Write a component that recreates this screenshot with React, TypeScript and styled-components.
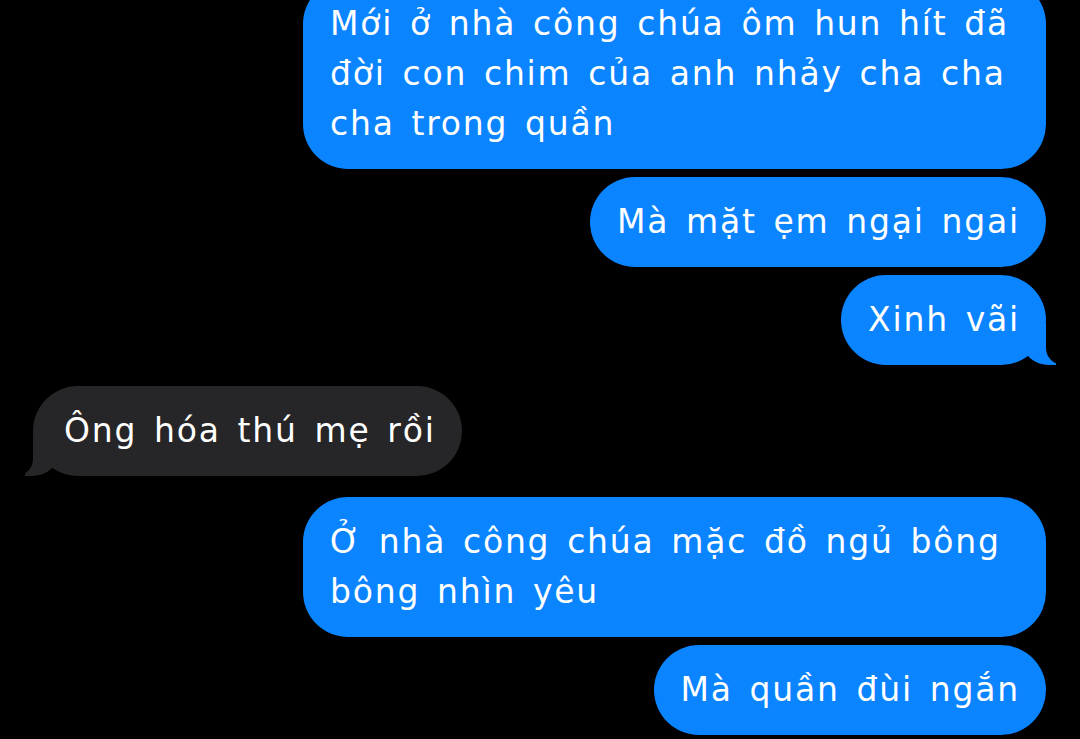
import React from "react";
import styled, { createGlobalStyle, css } from "styled-components";

const GlobalStyle = createGlobalStyle`
  html, body { margin: 0; padding: 0; background: #000; }
  * { box-sizing: border-box; }
`;

const Screen = styled.div`
  width: 1080px;
  height: 739px;
  overflow: hidden;
  background: #000;
  font-family: "DejaVu Sans", Inter, "Noto Sans", sans-serif;
`;

const Thread = styled.div`
  display: flex;
  flex-direction: column;
  gap: 21px;
  margin-top: -21px;
  padding: 0 34px 0 33px;
`;

const Group = styled.div`
  display: flex;
  flex-direction: column;
  gap: 8px;
`;

const Row = styled.div<{ $from: "me" | "them" }>`
  display: flex;
  justify-content: ${(p) => (p.$from === "me" ? "flex-end" : "flex-start")};
`;

const BLUE = "#0a84ff";
const GRAY = "#262628";

const Bubble = styled.div<{ $from: "me" | "them"; $tail?: boolean; $wide?: boolean }>`
  position: relative;
  max-width: 743px;
  ${(p) => p.$wide && css`width: 743px;`}
  padding: ${(p) => (p.$from === "me" ? "20px 26px 20px 27px" : "20px 26px 20px 31px")};
  border-radius: 45px;
  background: ${(p) => (p.$from === "me" ? BLUE : GRAY)};
  color: #fff;
  font-size: 33px;
  line-height: 50px;
  letter-spacing: 1.8px;
  word-spacing: 4.5px;
  white-space: nowrap;

  ${(p) =>
    p.$tail &&
    p.$from === "me" &&
    css`
      &::before {
        content: "";
        position: absolute;
        bottom: 0;
        right: -10px;
        width: 34px;
        height: 42px;
        background: ${BLUE};
        border-bottom-left-radius: 27px 24px;
      }
      &::after {
        content: "";
        position: absolute;
        bottom: 0;
        right: -44px;
        width: 44px;
        height: 42px;
        background: #000;
        border-bottom-left-radius: 17px;
      }
    `}

  ${(p) =>
    p.$tail &&
    p.$from === "them" &&
    css`
      &::before {
        content: "";
        position: absolute;
        bottom: 0;
        left: -8px;
        width: 34px;
        height: 42px;
        background: ${GRAY};
        border-bottom-right-radius: 27px 24px;
      }
      &::after {
        content: "";
        position: absolute;
        bottom: 0;
        left: -44px;
        width: 44px;
        height: 42px;
        background: #000;
        border-bottom-right-radius: 17px;
      }
    `}
`;

const Text = styled.span`
  position: relative;
  z-index: 1;
`;

type Msg = { lines: string[]; tail?: boolean; wide?: boolean };
type G = { from: "me" | "them"; msgs: Msg[] };

const groups: G[] = [
  {
    from: "me",
    msgs: [
      {
        lines: [
          "Mới ở nhà công chúa ôm hun hít đã",
          "đời con chim của anh nhảy cha cha",
          "cha trong quần",
        ],
        wide: true,
      },
      { lines: ["Mà mặt ẹm ngại ngai"] },
      { lines: ["Xinh vãi"], tail: true },
    ],
  },
  { from: "them", msgs: [{ lines: ["Ông hóa thú mẹ rồi"], tail: true }] },
  {
    from: "me",
    msgs: [
      { lines: ["Ở nhà công chúa mặc đồ ngủ bông", "bông nhìn yêu"], wide: true },
      { lines: ["Mà quần đùi ngắn"] },
    ],
  },
];

export default function App() {
  return (
    <Screen>
      <GlobalStyle />
      <Thread>
        {groups.map((g, gi) => (
          <Group key={gi}>
            {g.msgs.map((m, mi) => (
              <Row key={mi} $from={g.from}>
                <Bubble $from={g.from} $tail={m.tail} $wide={m.wide}>
                  <Text>
                    {m.lines.map((l, li) => (
                      <React.Fragment key={li}>
                        {li > 0 && <br />}
                        {l}
                      </React.Fragment>
                    ))}
                  </Text>
                </Bubble>
              </Row>
            ))}
          </Group>
        ))}
      </Thread>
    </Screen>
  );
}
